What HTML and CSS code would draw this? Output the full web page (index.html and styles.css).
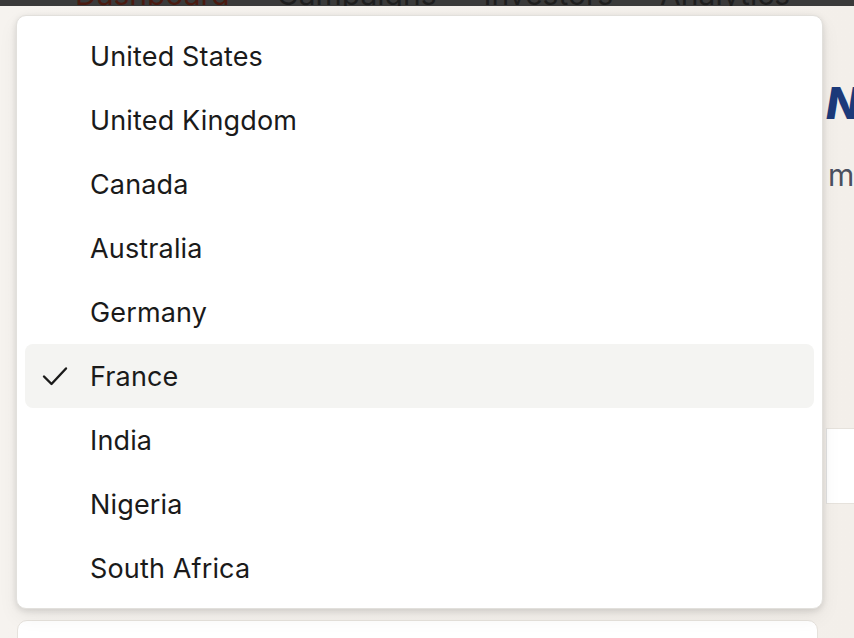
FILE: index.html
```html
<!DOCTYPE html>
<html lang="en">
<head>
<meta charset="utf-8">
<title>Country select</title>
<link rel="stylesheet" href="styles.css">
</head>
<body>
<header class="topbar">
  <nav class="nav">
    <span class="nav-link active">Dashboard</span>
    <span class="nav-link">Campaigns</span>
    <span class="nav-link">Investors</span>
    <span class="nav-link">Analytics</span>
  </nav>
</header>
<main class="page">
  <section class="left-col">
    <div class="spacer"></div>
    <div class="card bottom-card"></div>
  </section>
  <section class="right-col">
    <h1 class="title">New Campaign</h1>
    <p class="subtitle">manage</p>
    <div class="card side-card"></div>
  </section>
</main>
<div class="dropdown" role="listbox">
  <div class="option">United States</div>
  <div class="option">United Kingdom</div>
  <div class="option">Canada</div>
  <div class="option">Australia</div>
  <div class="option">Germany</div>
  <div class="option selected"><svg class="check" viewBox="0 0 26 20" width="26" height="20"><path d="M2 10.5 L9.5 18 L24 2.5" fill="none" stroke="#1a1a1a" stroke-width="2.4" stroke-linecap="round" stroke-linejoin="round"/></svg>France</div>
  <div class="option">India</div>
  <div class="option">Nigeria</div>
  <div class="option">South Africa</div>
</div>
</body>
</html>
```

FILE: styles.css
```css
html, body {
  margin: 0;
  padding: 0;
}
body {
  width: 854px;
  height: 638px;
  overflow: hidden;
  background: linear-gradient(90deg, #f6f3ef 0%, #f3efea 100%);
  font-family: Inter, "Noto Sans", sans-serif;
  position: relative;
}
.topbar {
  height: 6px;
  background: #3a3a3a;
  overflow: hidden;
  display: flex;
  align-items: flex-end;
}
.nav {
  display: flex;
  gap: 47px;
  padding-left: 75px;
  margin-bottom: -3px;
}
.nav-link {
  font-size: 30px;
  line-height: 30px;
  color: #1e1e1e;
  white-space: nowrap;
}
.nav-link.active {
  color: #4a1a10;
}
.page {
  display: grid;
  grid-template-columns: 801px 400px;
  column-gap: 8px;
  padding-left: 17px;
}
.spacer {
  height: 614px;
}
.card {
  background: #fff;
  border: 1px solid #e6e2dc;
  border-radius: 10px;
}
.bottom-card {
  height: 100px;
}
.right-col {
  padding-top: 73px;
}
.title {
  margin: 0;
  font-size: 44px;
  font-weight: 800;
  font-style: italic;
  color: #1c3a7a;
  line-height: 48px;
  white-space: nowrap;
}
.subtitle {
  margin: 32px 0 0 2px;
  font-size: 30px;
  color: #4a5060;
  line-height: 32px;
}
.side-card {
  margin-top: 237px;
  height: 74px;
  border-radius: 0;
  border-left: 1px solid #e2e2e2;
}
.dropdown {
  position: absolute;
  top: 15px;
  left: 16px;
  width: 807px;
  box-sizing: border-box;
  padding: 8px;
  background: #fff;
  border: 1px solid #e2e0dc;
  border-radius: 10px;
  box-shadow: 0 2px 6px rgba(0, 0, 0, 0.12), 0 8px 20px rgba(0, 0, 0, 0.06);
}
.option {
  height: 64px;
  display: flex;
  align-items: center;
  padding-left: 65px;
  font-size: 27px;
  letter-spacing: 0.15px;
  color: #1a1a1a;
  border-radius: 8px;
  position: relative;
}
.option.selected {
  background: #f4f4f2;
}
.check {
  position: absolute;
  left: 17px;
  top: 22px;
}
```
